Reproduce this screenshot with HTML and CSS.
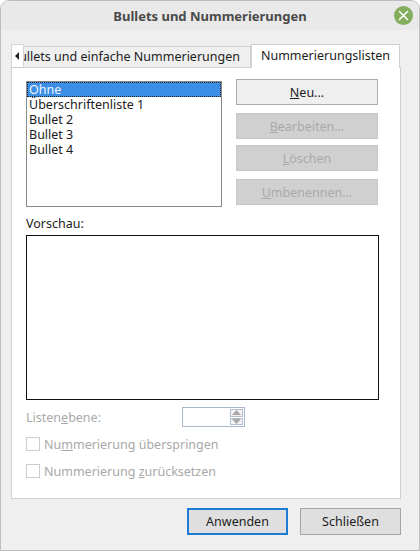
FILE: index.html
```html
<!DOCTYPE html>
<html lang="de">
<head>
  <meta charset="UTF-8">
  <title>Bullets und Nummerierungen</title>
  <link rel="stylesheet" href="styles.css">
</head>
<body>

  <div class="window">
    <div class="titlebar">
      <span></span>
      <span class="title">Bullets und Nummerierungen</span>
      <span class="close-cell">
        <span class="close-button">
          <svg width="11" height="11" viewBox="0 0 11 11"><path d="M1.5 1.5 L9.5 9.5 M9.5 1.5 L1.5 9.5" stroke="#fff" stroke-width="1.6" stroke-linecap="round"/></svg>
        </span>
      </span>
    </div>

    <div class="content">
      <div class="tabs">
        <div class="tab-scroll">
          <svg width="5" height="8" viewBox="0 0 5 8"><path d="M4 0 L0 4 L4 8 Z" fill="#222"/></svg>
        </div>
        <div class="tab"><span class="tab-clip">Bullets und einfache Nummerierungen</span></div>
        <div class="tab active">Nummerierungslisten</div>
      </div>

      <div class="panel">
        <div class="top-row">
          <div class="listbox">
            <div class="list-item selected">Ohne</div>
            <div class="list-item">Überschriftenliste 1</div>
            <div class="list-item">Bullet 2</div>
            <div class="list-item">Bullet 3</div>
            <div class="list-item">Bullet 4</div>
          </div>
          <div class="button-column">
            <button class="btn"><u>N</u>eu...</button>
            <button class="btn disabled"><u>B</u>earbeiten...</button>
            <button class="btn disabled gap-small"><u>L</u>öschen</button>
            <button class="btn disabled"><u>U</u>mbenennen...</button>
          </div>
        </div>

        <div class="label preview-label">Vorschau:</div>
        <div class="preview"></div>

        <div class="level-row">
          <span class="label disabled-text">Listen<u>e</u>bene:</span>
          <div class="spin">
            <div class="spin-field"></div>
            <div class="spin-buttons">
              <div class="spin-btn"><svg width="9" height="5" viewBox="0 0 9 5"><path d="M0 5 L4.5 0 L9 5 Z" fill="#a8a8a8"/></svg></div>
              <div class="spin-btn"><svg width="9" height="5" viewBox="0 0 9 5"><path d="M0 0 L4.5 5 L9 0 Z" fill="#a8a8a8"/></svg></div>
            </div>
          </div>
        </div>

        <label class="check-row">
          <span class="checkbox"></span>
          <span class="disabled-text">Nu<u>m</u>merierung überspringen</span>
        </label>
        <label class="check-row">
          <span class="checkbox"></span>
          <span class="disabled-text">Nummerierung <u>z</u>urücksetzen</span>
        </label>
      </div>

      <div class="footer">
        <button class="footer-btn default">Anwenden</button>
        <button class="footer-btn">Schließen</button>
      </div>
    </div>
  </div>

</body>
</html>
```

FILE: styles.css
```css
* {
  box-sizing: border-box;
}

body {
  margin: 0;
  background-color: #fff;
  font-family: "Noto Sans", "DejaVu Sans", sans-serif;
  font-size: 12.5px;
  color: #1c1c1c;
}

.window {
  width: 420px;
  height: 551px;
  border: 1px solid #bdbdbd;
  border-radius: 9px 9px 0 0;
  background-color: #efefef;
  overflow: hidden;
}

.titlebar {
  height: 29px;
  background-color: #e9e9e9;
  display: grid;
  grid-template-columns: 1fr auto 1fr;
  align-items: center;
}

.title {
  font-weight: bold;
  color: #4a4a4a;
  font-size: 13px;
}

.close-cell {
  display: flex;
  justify-content: flex-end;
  padding-right: 6px;
}

.close-button {
  width: 19px;
  height: 19px;
  border-radius: 50%;
  background-color: #84ad5e;
  display: flex;
  align-items: center;
  justify-content: center;
}

.content {
  padding: 14px 18px 0 10px;
}

.tabs {
  display: flex;
  align-items: flex-end;
  height: 23px;
}

.tab-scroll {
  width: 13px;
  height: 23px;
  background-color: #fff;
  border: 1px solid #d4d4d4;
  border-bottom: none;
  display: flex;
  align-items: center;
  justify-content: center;
}

.tab {
  width: 227px;
  height: 21px;
  border: 1px solid #d0d0d0;
  border-bottom: none;
  border-left: none;
  background-color: #efefef;
  overflow: hidden;
  white-space: nowrap;
  line-height: 20px;
  padding-left: 2px;
}

.tab-clip {
  margin-left: -15px;
}

.tab.active {
  width: 149px;
  height: 24px;
  line-height: 22px;
  background-color: #fff;
  border-left: 1px solid #d0d0d0;
  padding-left: 0;
  text-align: center;
  margin-bottom: -1px;
  position: relative;
}

.panel {
  height: 432px;
  background-color: #fff;
  border: 1px solid #d0d0d0;
  padding: 11px 21px 0 14px;
}

.top-row {
  display: flex;
  gap: 14px;
}

.listbox {
  width: 196px;
  height: 126px;
  margin-top: 2px;
  border: 1px solid #8a8a8a;
  background-color: #fff;
}

.list-item {
  height: 15px;
  line-height: 15px;
  padding-left: 2px;
  white-space: nowrap;
}

.list-item.selected {
  background-color: #3d8ee6;
  color: #eef4ff;
  outline: 1px dotted #222;
  outline-offset: -1px;
}

.button-column {
  display: flex;
  flex-direction: column;
  gap: 8px;
}

.btn {
  width: 142px;
  height: 26px;
  font-family: inherit;
  font-size: 12.5px;
  color: #1c1c1c;
  background-color: #efefef;
  border: 1px solid #ababab;
  padding: 0;
}

.btn.disabled {
  background-color: #d0d0d0;
  border-color: #c6c6c6;
  color: #a9a9a9;
}

.btn.gap-small {
  margin-top: -2px;
}

.label {
  color: #1c1c1c;
}

.preview-label {
  margin-top: 8px;
  height: 18px;
  line-height: 18px;
}

.preview {
  width: 353px;
  height: 165px;
  border: 1px solid #111;
  margin-top: 2px;
}

.level-row {
  display: flex;
  align-items: center;
  margin-top: 7px;
  height: 20px;
}

.level-row .label {
  width: 156px;
}

.disabled-text {
  color: #a9a9a9;
}

.spin {
  display: flex;
  width: 63px;
  height: 20px;
  border: 1px solid #a9b8cf;
  background-color: #fff;
}

.spin-field {
  flex: 1;
}

.spin-buttons {
  width: 15px;
  display: flex;
  flex-direction: column;
  gap: 1px;
  padding: 1px;
}

.spin-btn {
  flex: 1;
  border: 1px solid #b4c0d2;
  background-color: #f2f2f2;
  display: flex;
  align-items: center;
  justify-content: center;
}

.check-row {
  display: flex;
  align-items: center;
  gap: 4px;
  height: 20px;
  margin-top: 7px;
}

.checkbox {
  width: 14px;
  height: 14px;
  border: 1px solid #cccccc;
  background-color: #fff;
}

.footer {
  display: flex;
  justify-content: flex-end;
  gap: 12px;
  margin-top: 9px;
}

.footer-btn {
  width: 101px;
  height: 27px;
  font-family: inherit;
  font-size: 12.5px;
  color: #1c1c1c;
  background-color: #dfdfdf;
  border: 1px solid #a4a4a4;
  padding: 0;
}

.footer-btn.default {
  border: 2px solid #1c7cd6;
}
```
